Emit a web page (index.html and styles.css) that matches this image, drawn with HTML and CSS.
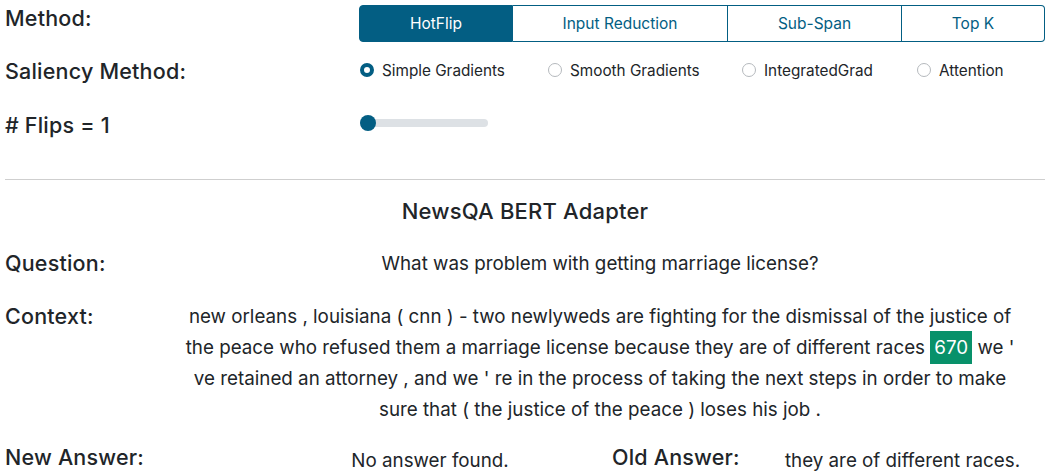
FILE: index.html
```html
<!DOCTYPE html>
<html>
<head>
<meta charset="utf-8">
<link rel="stylesheet" href="styles.css">
</head>
<body>
<div class="page">
  <div class="row row-method">
    <div class="label">Method:</div>
    <div class="btn-group">
      <button class="btn active">HotFlip</button>
      <button class="btn">Input Reduction</button>
      <button class="btn">Sub-Span</button>
      <button class="btn">Top K</button>
    </div>
  </div>
  <div class="row row-saliency">
    <div class="label">Saliency Method:</div>
    <div class="radios">
      <label class="radio r1"><span class="dot checked"></span>Simple Gradients</label>
      <label class="radio r2"><span class="dot"></span>Smooth Gradients</label>
      <label class="radio r3"><span class="dot"></span>IntegratedGrad</label>
      <label class="radio r4"><span class="dot"></span>Attention</label>
    </div>
  </div>
  <div class="row row-flips">
    <div class="label">#&nbsp;Flips = 1</div>
    <div class="slider"><span class="thumb"></span></div>
  </div>
  <hr class="divider">
  <div class="title">NewsQA BERT Adapter</div>
  <div class="qa-row question">
    <div class="label">Question:</div>
    <div class="value">What was problem with getting marriage license?</div>
  </div>
  <div class="qa-row context">
    <div class="label">Context:</div>
    <div class="value">new orleans , louisiana ( cnn ) - two newlyweds are fighting for the dismissal of the justice of the peace who refused them a marriage license because they are of different races <span class="hl">670</span> we ' ve retained an attorney , and we ' re in the process of taking the next steps in order to make sure that ( the justice of the peace ) loses his job .</div>
  </div>
  <div class="answers">
    <div class="label">New Answer:</div>
    <div class="ans">No answer found.</div>
    <div class="label old">Old Answer:</div>
    <div class="ans last">they are of different races.</div>
  </div>
</div>
</body>
</html>
```
FILE: styles.css
```css
html, body {
  margin: 0;
  padding: 0;
  background: #fff;
}
body {
  font-family: Inter, "Noto Sans", "Liberation Sans", sans-serif;
  color: #212529;
}
.page {
  padding: 0 5px;
  width: 1040px;
}
.row {
  display: grid;
  grid-template-columns: 354px 1fr;
  align-items: center;
}
.label {
  font-size: 21.5px;
  font-weight: 500;
  color: #212529;
  letter-spacing: 0.2px;
}
.row-method {
  height: 42px;
  align-items: start;
}
.row-method .label {
  line-height: 36px;
}
.btn-group {
  display: flex;
  margin-top: 5px;
  height: 37px;
  width: 686px;
}
.btn {
  font-family: inherit;
  font-size: 15.5px;
  color: #035e83;
  background: #fff;
  border: 1px solid #035e83;
  margin: 0;
  padding: 0;
  cursor: pointer;
}
.btn + .btn { border-left: none; }
.btn:nth-child(1) { width: 154px; border-radius: 4px 0 0 4px; }
.btn:nth-child(2) { width: 215px; }
.btn:nth-child(3) { width: 174px; }
.btn:nth-child(4) { width: 143px; border-radius: 0 4px 4px 0; }
.btn.active {
  background: #035e83;
  color: #fff;
}
.row-saliency {
  height: 58px;
}
.radios {
  display: flex;
  align-items: center;
  font-size: 15.3px;
  margin-top: -2px;
}
.radio {
  display: flex;
  align-items: center;
  gap: 8px;
}
.r1 { width: 188px; }
.r2 { width: 194px; }
.r3 { width: 175px; }
.dot {
  width: 14px;
  height: 14px;
  box-sizing: border-box;
  border: 1px solid #b5b9bd;
  border-radius: 50%;
  background: #fff;
  margin-left: 1px;
}
.dot.checked {
  border: 4px solid #035e83;
}
.row-flips {
  height: 50px;
}
.slider {
  position: relative;
  width: 128px;
  height: 8px;
  margin-left: 1px;
  margin-top: -4px;
  background: #dde1e5;
  border-radius: 4px;
}
.thumb {
  position: absolute;
  left: 0;
  top: -4px;
  width: 16px;
  height: 16px;
  border-radius: 50%;
  background: #035e83;
}
.divider {
  border: none;
  border-top: 1px solid #cfcfcf;
  margin: 29px 0 0 0;
  height: 0;
}
.title {
  text-align: center;
  font-size: 22px;
  font-weight: 500;
  line-height: 30px;
  margin-top: 16px;
  letter-spacing: 0.2px;
}
.qa-row {
  display: grid;
  grid-template-columns: 150px 1fr;
  align-items: start;
}
.qa-row .label {
  line-height: 31px;
}
.qa-row .value {
  text-align: center;
  font-size: 18.8px;
  line-height: 31px;
}
.question {
  margin-top: 22px;
}
.context {
  margin-top: 22px;
}
.context .value {
  padding: 0 20px;
}
.hl {
  background: #08916a;
  color: #fff;
  padding: 5px 4px;
}
.answers {
  display: grid;
  grid-template-columns: 330px 190px 165px 1fr;
  align-items: center;
  margin-top: 14px;
  line-height: 31px;
}
.answers .old {
  margin-left: 87px;
  white-space: nowrap;
}
.ans {
  text-align: center;
  font-size: 18.8px;
  padding-top: 6px;
  white-space: nowrap;
}
.ans.last {
  padding-left: 70px;
}
```
